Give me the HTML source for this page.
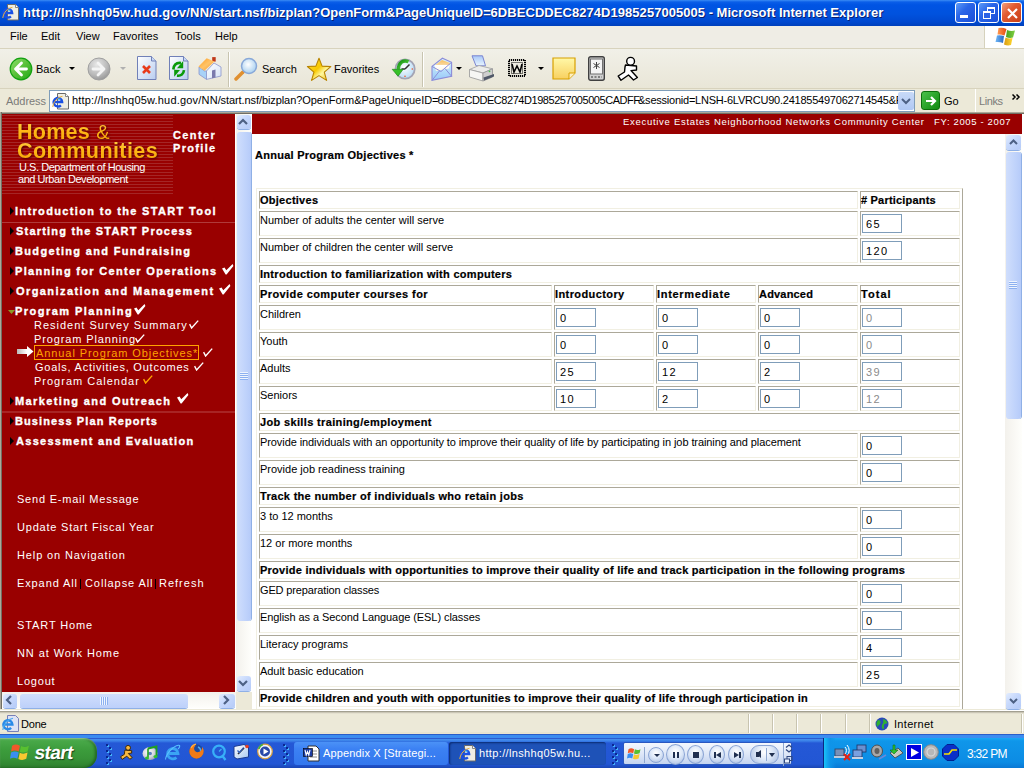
<!DOCTYPE html>
<html><head><meta charset="utf-8">
<style>
*{box-sizing:border-box}
html,body{margin:0;padding:0;width:1024px;height:768px;overflow:hidden;background:#ece9d8;font-family:"Liberation Sans",sans-serif}
.a{position:absolute}
#title{left:0;top:0;width:1024px;height:26px;background:linear-gradient(#3b8cf5 0,#0a5ee8 2px,#0054e3 5px,#0052de 14px,#0048cf 22px,#0040bb 26px)}
#title .t{left:23px;top:5px;color:#fff;font:bold 13px "Liberation Sans",sans-serif;text-shadow:1px 1px 0 #0a1e70;white-space:nowrap;letter-spacing:0.07px}
#menu{left:0;top:26px;width:1024px;height:23px;background:#efede5;border-bottom:1px solid #d8d3bd}
#menu span{position:absolute;top:4px;font-size:11px;color:#000}
#tool{left:0;top:49px;width:1024px;height:40px;background:linear-gradient(#f1f0e8,#e9e6d7);border-bottom:1px solid #d8d3bd}
#addr{left:0;top:89px;width:1024px;height:24px;background:#ece9d8}
#frames{left:0;top:112px;width:1024px;height:598px;background:#ece9d8}
#left{left:0;top:0;width:252px;height:597px;background:#fff}
#right{left:252px;top:0;width:772px;height:597px;background:#fff}
#status{left:0;top:710px;width:1024px;height:24px;background:linear-gradient(#8c8a7c 0,#b8b4a4 1px,#dcd8c8 2px,#ece9d8 3px,#ece9d8 21px,#e2ddc8 22px,#f2ecd8 23px);border-top:1px solid #fff}

#task{left:0;top:734px;width:1024px;height:34px;background:linear-gradient(#2a5ec8 0,#2a5ec8 1px,#3c8cf0 1px,#3c8cf0 4px,#2c5cd0 4px,#2c5cd0 5px,#4892ee 5px,#3a80e8 7px,#2458d6 9px,#2256d4 30px,#1a46b4 34px)}

.wb{top:2px;width:21px;height:21px;border:1px solid #fff;border-radius:3px;background:linear-gradient(135deg,#5e9cf8 0,#2a66e8 40%,#1a4ed8 100%)}
.lbl{top:14px;font-size:11px;color:#000}
.dd{top:18px;width:0;height:0;border-left:3px solid transparent;border-right:3px solid transparent;border-top:3px solid #000}
.sep{top:3px;width:2px;height:35px;border-left:1px solid #c8c4b0;border-right:1px solid #fff}

.logo1{font:bold 21.6px "Liberation Sans",sans-serif;background:linear-gradient(#ffd050 0%,#ffb818 45%,#f5a000 100%);-webkit-background-clip:text;background-clip:text;color:transparent;white-space:nowrap;letter-spacing:0.2px;filter:drop-shadow(1px 1.5px 1px rgba(60,0,0,.8))}
.logo2{font:11px "Liberation Sans",sans-serif;color:#fff;white-space:nowrap;letter-spacing:-0.2px}
.cp{font:bold 11px "Liberation Sans",sans-serif;color:#fff;letter-spacing:1.2px;-webkit-text-stroke:0.3px #fff}
.nav{font:bold 11px "Liberation Sans",sans-serif;color:#fff;white-space:nowrap;line-height:14px;-webkit-text-stroke:0.35px #fff}
.nav i{display:inline-block;width:0;height:0;border-top:3.5px solid transparent;border-bottom:3.5px solid transparent;border-left:4px solid #000;margin:0 2px 0 2px;vertical-align:0px}
.nav i.dn{border-left:3.5px solid transparent;border-right:3.5px solid transparent;border-top:4px solid #8a8a30;border-bottom:0;margin:0 1px 0 0;vertical-align:1px}
.ck{font-size:12px;letter-spacing:0}
.sub{font:11px "Liberation Sans",sans-serif;color:#fff;white-space:nowrap;line-height:14px;letter-spacing:1px}
.ck2{font-size:11px;letter-spacing:0}
.bl{left:17px;font:11px "Liberation Sans",sans-serif;color:#fff;white-space:nowrap;line-height:14px;letter-spacing:0.65px}
.vtrack{background:linear-gradient(90deg,#f3f1ec,#fefefb)}
.htrack{background:linear-gradient(#f3f1ec,#fefefb)}
.sbtn{border-radius:3px;background:linear-gradient(135deg,#e2ecfe 0,#c6d8fc 45%,#b4caf8 100%);box-shadow:0 1px 0 #8fb0e6}
.thumb{border-radius:3px;background:linear-gradient(90deg,#d0defc,#c0d3fb 60%,#b6cbf9);box-shadow:1px 0 0 #8fb0e6}
.grip{position:absolute;width:8px;height:8px;background:repeating-linear-gradient(#eef4fe 0,#eef4fe 1px,#8cb0f0 1px,#8cb0f0 2px)}
.hgrip{position:absolute;width:8px;height:8px;background:repeating-linear-gradient(90deg,#eef4fe 0,#eef4fe 1px,#8cb0f0 1px,#8cb0f0 2px)}
.ar{width:0;height:0;border-top:4px solid transparent;border-bottom:4px solid transparent;border-left:4px solid #000}

.hdr{font:9.5px "Liberation Sans",sans-serif;color:#fff;white-space:nowrap;line-height:12px;margin-top:-2px}
.ttl{font:bold 11px "Liberation Sans",sans-serif;color:#000;white-space:nowrap;line-height:13px;margin-top:-2px;margin-left:-1px;-webkit-text-stroke:0.2px #000}
.bh{font:bold 11px "Liberation Sans",sans-serif;color:#000;white-space:nowrap;line-height:13px;margin-top:-2px;margin-left:-1px;-webkit-text-stroke:0.2px #000}
.rg{font:11px "Liberation Sans",sans-serif;color:#000;white-space:nowrap;line-height:13px;margin-top:-2px;margin-left:-1px}
.cl{border:1px solid;border-color:#aca899 #f1efe2 #f1efe2 #aca899}
.tb{border:1px solid;border-color:#f1efe2 #aca899 #aca899 #f1efe2}
.inp{width:40px;height:19px;border:1px solid #7f9db9;background:#fff;font:11px "Liberation Sans",sans-serif;line-height:19px;padding-left:3px;letter-spacing:1.4px}

.ssep{top:3px;width:2px;height:19px;border-left:1px solid #c8c4b0;border-right:1px solid #fff}
#startbtn{left:0;top:4px;width:97px;height:30px;border-radius:0 13px 13px 0;background:linear-gradient(#6ac46a 0,#48a848 3px,#3c9c3c 12px,#389438 20px,#2e802e 30px);box-shadow:inset -2px 0 3px rgba(0,40,0,.45),inset 0 1px 1px rgba(255,255,255,.4)}
.grip2{width:6px;height:22px;background:radial-gradient(circle at 1.5px 1.5px,#0a2a90 1.2px,transparent 1.6px) 0 0/6px 4px,radial-gradient(circle at 3px 3px,#7ab0f8 1px,transparent 1.5px) 0 0/6px 4px}
.tbtn{top:8px;height:23px;border-radius:3px}
.tbt{top:5px;font-size:11px;color:#fff;white-space:nowrap;letter-spacing:0.15px}
#wmp{left:623px;top:8px;width:169px;height:23px;border-radius:2px;background:linear-gradient(#f4f8fe 0,#dfe8f8 50%,#c4d4f0 100%);border:1px solid #2a58c0}
.wb2{border-radius:50%;background:radial-gradient(circle at 50% 35%,#fff 0,#dde8f8 45%,#a8bce0 100%);border:1px solid #8aa4d4}
#tray{left:823px;top:4px;width:201px;height:30px;background:linear-gradient(90deg,#1ac4f8 0,#14a8f0 3px,#0f94e8 6px,rgba(15,148,232,0) 12px),linear-gradient(#18a8f4 0,#0f96ea 3px,#0c8ce4 24px,#0a78d4 30px);border-left:1px solid #0a2a80}
</style></head><body>
<div id="title" class="a">
 <svg class="a" style="left:2px;top:4px" width="17" height="17" viewBox="0 0 17 17"><path d="M5.5 .5h8l3 3v12.5h-11z" fill="#efeee4" stroke="#6a6a6a"/><path d="M13.5 .5v3h3" fill="#fff" stroke="#6a6a6a" stroke-width=".8"/><path d="M1.8 9h8.4a4.3 4.3 0 1 0-1.3 3.3" stroke="#1a50e4" stroke-width="2.3" fill="none"/><path d="M6 6.2h2.5" stroke="#40d0ff" stroke-width="1"/><path d="M.8 14C1.4 8.5 5.5 4 10.5 3.3" stroke="#e8b040" stroke-width="1" fill="none"/></svg>
 <div class="a t" style="letter-spacing:0.26px">http://lnshhq05w.hud.gov/NN/</div><div class="a t" style="left:212.7px;letter-spacing:-0.01px">start.nsf/bizplan?OpenForm&amp;PageUniqueID=</div><div class="a t" style="left:490.6px;letter-spacing:0.05px">6DBECDDEC8274D1985257005005 - </div><div class="a t" style="left:716.6px;letter-spacing:0.02px">Microsoft Internet Explorer</div>
 <div class="a wb" style="left:955px"><div class="a" style="left:4px;top:12px;width:8px;height:3px;background:#fff"></div></div>
 <div class="a wb" style="left:978px"><div class="a" style="left:8px;top:4px;width:8px;height:7px;border:1px solid #fff;border-top-width:2px"></div><div class="a" style="left:4px;top:8px;width:8px;height:8px;border:1px solid #fff;border-top-width:2px;background:#2a62e6"></div></div>
 <div class="a wb" style="left:1001px;background:linear-gradient(135deg,#f0a080 0,#e25a30 40%,#c8401a 100%)"><svg class="a" style="left:4px;top:4px" width="13" height="13"><path d="M2 2L11 11M11 2L2 11" stroke="#fff" stroke-width="2.2"/></svg></div>
</div>
<div id="menu" class="a">
 <span style="left:10px">File</span><span style="left:41px">Edit</span><span style="left:76px">View</span><span style="left:113px">Favorites</span><span style="left:175px">Tools</span><span style="left:215px">Help</span>
 <div class="a" style="left:984px;top:0;width:40px;height:22px;background:#fff;border-left:1px solid #d6d2bd">
  <svg class="a" style="left:9px;top:1px" width="22" height="20" viewBox="0 0 22 20"><defs><linearGradient id="wo" x1="0" x2="1"><stop offset="0" stop-color="#ff9a50"/><stop offset="1" stop-color="#e84a10"/></linearGradient><linearGradient id="wg" x1="0" x2="1"><stop offset="0" stop-color="#4aa020"/><stop offset="1" stop-color="#80d040"/></linearGradient><linearGradient id="wbl" x1="0" x2="1"><stop offset="0" stop-color="#70b8f8"/><stop offset="1" stop-color="#2a68c0"/></linearGradient><linearGradient id="wy" x1="0" x2="1"><stop offset="0" stop-color="#d89a10"/><stop offset="1" stop-color="#ffd830"/></linearGradient></defs><path d="M4.5 1Q8.5 0 12.5 2L10.5 8.5Q7 7 3.5 7.5z" fill="url(#wo)"/><path d="M13 3Q17 4.5 21 3.5L19 10.5Q15.5 11.5 12 10z" fill="url(#wg)"/><path d="M3 8.5Q6.5 8 10 9L9 16Q5.5 14.5 1.5 15z" fill="url(#wbl)"/><path d="M11.5 10.5Q15 12 18.5 11L17 18Q13.5 19 10 17.5z" fill="url(#wy)"/></svg>
 </div>
</div>
<div id="tool" class="a">
 <!-- back -->
 <svg class="a" style="left:9px;top:8px" width="24" height="24" viewBox="0 0 24 24"><defs><linearGradient id="gb" x1="0" y1="0" x2="1" y2="1"><stop offset="0" stop-color="#90e070"/><stop offset=".5" stop-color="#58c038"/><stop offset="1" stop-color="#20a818"/></linearGradient></defs><circle cx="12" cy="12" r="10.8" fill="url(#gb)" stroke="#12a010" stroke-width="1.2"/><path d="M12.5 6L6.5 12l6 6M7 12H17.5" stroke="#fff" stroke-width="2.8" fill="none" stroke-linecap="round" stroke-linejoin="round"/></svg>
 <span class="a lbl" style="left:36px">Back</span>
 <div class="a dd" style="left:69px"></div>
 <svg class="a" style="left:87px;top:8px" width="24" height="24" viewBox="0 0 24 24"><defs><radialGradient id="gf" cx="40%" cy="30%" r="70%"><stop offset="0" stop-color="#e8e8e8"/><stop offset=".7" stop-color="#b8b8b8"/><stop offset="1" stop-color="#9a9a9a"/></radialGradient></defs><circle cx="12" cy="12" r="11" fill="url(#gf)" stroke="#a0a0a0" stroke-width="1"/><path d="M11 6l6 6-6 6M16.5 12H6" stroke="#f4f4f4" stroke-width="2.8" fill="none" stroke-linecap="round" stroke-linejoin="round"/></svg>
 <div class="a dd" style="left:120px;border-top-color:#b0b0b0"></div>
 <!-- stop -->
 <svg class="a" style="left:137px;top:7px" width="20" height="24" viewBox="0 0 20 24"><defs><linearGradient id="gd" x1="0" y1="0" x2="1" y2="1"><stop offset="0" stop-color="#fff"/><stop offset="1" stop-color="#b8cdf0"/></linearGradient></defs><path d="M.5 .5h14l4.5 4.5v18.5H.5z" fill="url(#gd)" stroke="#7080b8"/><path d="M14.5 .5v4.5h4.5" fill="#c8d8f4" stroke="#7080b8"/><path d="M6 10l7 7M13 10l-7 7" stroke="#e83a1a" stroke-width="2.6"/></svg>
 <!-- refresh -->
 <svg class="a" style="left:169px;top:7px" width="20" height="24" viewBox="0 0 20 24"><path d="M.5 .5h14l4.5 4.5v18.5H.5z" fill="url(#gd)" stroke="#7080b8"/><path d="M14.5 .5v4.5h4.5" fill="#c8d8f4" stroke="#7080b8"/><path d="M4.3 13.5C4.8 9 7.5 6.5 12 7" stroke="#0a9a0a" stroke-width="2.6" fill="none"/><path d="M14.2 5V12.2H8z" fill="#0a9a0a"/><path d="M15 14.2C14.6 18 12 20.2 8 19.6" stroke="#0a9a0a" stroke-width="2.6" fill="none"/><path d="M5.2 13.8V20.8L11 14z" fill="#0a9a0a"/></svg>
 <!-- home -->
 <svg class="a" style="left:196px;top:6px" width="26" height="26" viewBox="0 0 26 26"><defs><linearGradient id="hr" x1="0" y1="0" x2="1" y2="1"><stop offset="0" stop-color="#ff9a20"/><stop offset=".5" stop-color="#ffc468"/><stop offset="1" stop-color="#f89020"/></linearGradient><linearGradient id="hw" x1="0" y1="0" x2="1" y2="1"><stop offset="0" stop-color="#fff"/><stop offset="1" stop-color="#d4e2f6"/></linearGradient></defs><path d="M3 12L8.5 16 10.5 16 10.5 24.4 3 19.3z" fill="#a8d2f8" stroke="#8a94cc" stroke-width=".8"/><path d="M10.5 16L18 8 25 12 25 21 10.5 24.4z" fill="url(#hw)" stroke="#8a94cc" stroke-width=".8"/><rect x="16.2" y="2.1" width="3.5" height="4.5" fill="#c03818"/><path d="M2.5 11.5L10.7 3.3 18.5 6.4 8.4 15.8z" fill="url(#hr)"/><path d="M16 15.4L19.5 14.6 19.5 22.4 16 23.3z" fill="#7a7aac"/></svg>
 <div class="a sep" style="left:228px"></div>
 <!-- search -->
 <svg class="a" style="left:234px;top:8px" width="25" height="24" viewBox="0 0 25 24"><defs><radialGradient id="gs" cx="45%" cy="40%" r="60%"><stop offset="0" stop-color="#fff"/><stop offset="1" stop-color="#a8d0f0"/></radialGradient></defs><path d="M2 22l7-7" stroke="#e09030" stroke-width="3.5" stroke-linecap="round"/><circle cx="15" cy="9" r="7.5" fill="url(#gs)" stroke="#88a8d8" stroke-width="1.5"/></svg>
 <span class="a lbl" style="left:262px">Search</span>
 <!-- star -->
 <svg class="a" style="left:306px;top:7px" width="26" height="25" viewBox="0 0 26 25"><defs><linearGradient id="gst" x1="0" y1="0" x2="1" y2="1"><stop offset="0" stop-color="#ffe040"/><stop offset=".45" stop-color="#f8c800"/><stop offset=".65" stop-color="#fff8a0"/><stop offset="1" stop-color="#f0b800"/></linearGradient></defs><path d="M13 2.3L16.1 10.1 24.8 10.6 18.3 16.2 20.6 24.4 13 19.6 5.6 24.4 7.9 16.2 1.4 10.5 9.9 10.1z" fill="url(#gst)" stroke="#b88400" stroke-width="1.1" stroke-linejoin="round"/></svg>
 <span class="a lbl" style="left:334px">Favorites</span>
 <!-- history -->
 <svg class="a" style="left:391px;top:6px" width="26" height="26" viewBox="0 0 26 26"><defs><radialGradient id="hf" cx="45%" cy="40%" r="60%"><stop offset="0" stop-color="#fff"/><stop offset="1" stop-color="#b8dcf6"/></radialGradient><linearGradient id="ha" x1="0" y1="0" x2="1" y2="1"><stop offset="0" stop-color="#109010"/><stop offset="1" stop-color="#70e050"/></linearGradient></defs><circle cx="14.1" cy="14" r="9.6" fill="url(#hf)" stroke="#a4a4b4" stroke-width="1.8"/><path d="M14 14L18.5 9.5M10.5 14H14" stroke="#303030" stroke-width="1.5"/><circle cx="21.3" cy="14" r=".8" fill="#f05020"/><circle cx="14" cy="21.3" r=".8" fill="#f05020"/><path d="M17.5 6.8C12.5 4.5 7.5 7.5 7.3 14.5" stroke="url(#ha)" stroke-width="3.4" fill="none"/><path d="M1.2 14.3L12.2 14.3 7 21.2z" fill="#38c028" stroke="#108010" stroke-width=".6"/></svg>
 <div class="a sep" style="left:422px"></div>
 <!-- mail -->
 <svg class="a" style="left:431px;top:6px" width="22" height="27" viewBox="0 0 22 27"><defs><linearGradient id="me" x1="0" y1="0" x2="0" y2="1"><stop offset="0" stop-color="#d8f6fe"/><stop offset="1" stop-color="#98c8f8"/></linearGradient><linearGradient id="ml" x1="0" y1="0" x2="0" y2="1"><stop offset="0" stop-color="#f8c060"/><stop offset=".45" stop-color="#f8d8a0"/><stop offset=".5" stop-color="#fff"/><stop offset="1" stop-color="#fff8e0"/></linearGradient></defs><path d="M1 11.4L11.4 3.2 20.6 7.3V21.3L1 25.4z" fill="url(#me)" stroke="#8c8cd8" stroke-width="1.1"/><path d="M3.5 10.5L11 5 19 8 18 13.5 5 16z" fill="url(#ml)"/><path d="M1 11.4L10 16.5 20.6 7.3M1 25.4L8.5 16M20.6 21.3L14 13.5" stroke="#8c8cd8" stroke-width="1" fill="none"/></svg>
 <div class="a dd" style="left:456px"></div>
 <!-- printer -->
 <svg class="a" style="left:468px;top:6px" width="27" height="28" viewBox="0 0 27 28"><defs><linearGradient id="pp" x1="0" y1="0" x2="0" y2="1"><stop offset="0" stop-color="#a8c8f8"/><stop offset="1" stop-color="#e8f4fe"/></linearGradient></defs><path d="M4 .8h10.5l3 10H8z" fill="url(#pp)" stroke="#7a84d0" stroke-width="1"/><path d="M1.5 14.5L11 10.5 24.5 13.8 15 18z" fill="#ececea" stroke="#a8a8a8" stroke-width=".9"/><path d="M1.5 14.5L15 18V26L1.5 22z" fill="#f6f6f4" stroke="#a0a0a0" stroke-width=".9"/><path d="M15 18L24.5 13.8V22L15 26z" fill="#cfcfcf" stroke="#989898" stroke-width=".9"/><path d="M15.5 22.5L26 19 26 21.5 16 25.5z" fill="#505868"/><circle cx="21.5" cy="16.3" r=".9" fill="#48c048"/></svg>
 <!-- word -->
 <svg class="a" style="left:508px;top:10px" width="18" height="18" viewBox="0 0 18 18"><rect x="1" y="1" width="16" height="16" fill="none" stroke="#000" stroke-width="2" stroke-dasharray="1.2 .8"/><rect x="3.5" y="3.5" width="11" height="11" fill="none" stroke="#000" stroke-width="1" stroke-dasharray="1 1"/><path d="M4 5l2 8 3-6 3 6 2-8" stroke="#000" stroke-width="1.6" fill="none"/></svg>
 <div class="a dd" style="left:538px"></div>
 <!-- sticky -->
 <svg class="a" style="left:552px;top:8px" width="24" height="23" viewBox="0 0 24 23"><defs><linearGradient id="gn" x1="0" y1="0" x2="0" y2="1"><stop offset="0" stop-color="#fff8a8"/><stop offset="1" stop-color="#f8d060"/></linearGradient></defs><path d="M1 1h22v15l-6 6H1z" fill="url(#gn)" stroke="#d8a000" stroke-width="1.2"/><path d="M23 16h-6v6" fill="#fff0c0" stroke="#d8a000"/></svg>
 <!-- palm -->
 <svg class="a" style="left:588px;top:7px" width="17" height="25" viewBox="0 0 17 25"><rect x=".7" y=".7" width="15.6" height="23.6" rx="2" fill="#d0d0d0" stroke="#404040" stroke-width="1.4"/><rect x="2.5" y="3" width="12" height="15" fill="#f4f4f4" stroke="#707070"/><path d="M8.5 6v7M5.5 7.5l6 4M11.5 7.5l-6 4" stroke="#404040" stroke-width="1"/><path d="M3 21h11" stroke="#808080" stroke-width="2" stroke-dasharray="2 1.5"/></svg>
 <!-- aim -->
 <svg class="a" style="left:616px;top:6px" width="24" height="28" viewBox="0 0 24 28"><path d="M9.5 10L20.5 11 20.5 15 15 15.6 21.4 22.5 17.5 25 12.5 20 5 25.3 2.2 21 8.5 17 9 12z" fill="#fff" stroke="#000" stroke-width="1.4" stroke-linejoin="round"/><circle cx="14.6" cy="6.3" r="3.9" fill="#fff" stroke="#000" stroke-width="1.4"/></svg>
</div>
<div id="addr" class="a">
 <span class="a" style="left:6px;top:6px;font-size:11px;color:#7b7b78;letter-spacing:-0.05px">Address</span>
 <div class="a" style="left:49px;top:1px;width:866px;height:22px;background:#fff;border:1px solid #7f9db9">
  <svg class="a" style="left:2px;top:2px" width="17" height="17" viewBox="0 0 17 17"><path d="M5.5 .5h8l3 3v12.5h-11z" fill="#efeee4" stroke="#6a6a6a"/><path d="M13.5 .5v3h3" fill="#fff" stroke="#6a6a6a" stroke-width=".8"/><path d="M1.8 9h8.4a4.3 4.3 0 1 0-1.3 3.3" stroke="#1a50e4" stroke-width="2.3" fill="none"/><path d="M6 6.2h2.5" stroke="#40d0ff" stroke-width="1"/><path d="M.8 14C1.4 8.5 5.5 4 10.5 3.3" stroke="#e8b040" stroke-width="1" fill="none"/></svg>
  <div class="a" style="left:22px;top:3px;width:826px;height:16px;overflow:hidden;font-size:11px;color:#000;white-space:nowrap"><span class="a" style="left:0;top:0;letter-spacing:0.19px">http://lnshhq05w.hud.gov/NN/</span><span class="a" style="left:148.5px;top:0;letter-spacing:-0.08px">start.nsf/bizplan?OpenForm&amp;PageUniqueID=</span><span class="a" style="left:365.5px;top:0;letter-spacing:-0.45px">6DBECDDEC8274D1985257005005CADFF</span><span class="a" style="left:566px;top:0;letter-spacing:-0.23px">&amp;sessionid=LNSH-6LVRCU90.241855497062714545&amp;PageID=</span></div>
  <div class="a" style="left:848px;top:1px;width:16px;height:18px;background:linear-gradient(#c8daf8,#b0c8f4);border-radius:2px"><svg class="a" style="left:3px;top:5px" width="10" height="8"><path d="M1 2l4 4 4-4" stroke="#4d6185" stroke-width="2" fill="none"/></svg></div>
 </div>
 <div class="a" style="left:921px;top:2px;width:19px;height:19px;border-radius:3px;background:linear-gradient(135deg,#48c048,#108a10);border:1px solid #0a700a"><svg class="a" style="left:2px;top:2px" width="14" height="14"><path d="M2 7h9M7 3l4 4-4 4" stroke="#fff" stroke-width="2.2" fill="none"/></svg></div>
 <span class="a" style="left:944px;top:6px;font-size:11px">Go</span>
 <div class="a" style="left:975px;top:0;width:1px;height:23px;background:#c8c4b0;border-right:1px solid #fff"></div>
 <span class="a" style="left:979px;top:6px;font-size:11px;color:#7b7b78;letter-spacing:-0.4px">Links</span>
 <svg class="a" style="left:1012px;top:5px" width="9" height="6" viewBox="0 0 9 6"><path d="M.5 .5L3 3 .5 5.5M4.5 .5L7 3 4.5 5.5" stroke="#000" stroke-width="1.5" fill="none"/></svg>
</div>

<div id="frames" class="a">
 <div id="left" class="a">
 <div class="a" style="left:0;top:0;width:252px;height:2px;background:linear-gradient(#aca899 0,#aca899 1px,#716f64 1px)"></div><div class="a" style="left:0;top:0;width:2px;height:597px;background:linear-gradient(90deg,#aca899 0,#aca899 1px,#716f64 1px)"></div>
 <div class="a" style="left:2px;top:2px;width:233px;height:578px;background:#990000"></div>
 <div class="a" style="left:2px;top:3px;width:171px;height:79px;background:repeating-linear-gradient(#a52626 0,#a52626 1px,#990000 1px,#990000 3px)"></div>
 <div class="a logo1" style="left:17px;top:7px">Homes <span style="font-weight:normal;font-size:20px">&amp;</span></div>
 <div class="a logo1" style="left:17px;top:26px;letter-spacing:0.4px">Communities</div>
 <div class="a logo2" style="left:19px;top:49px;letter-spacing:-0.45px">U.S. Department of Housing</div>
 <div class="a logo2" style="left:18px;top:61px;letter-spacing:-0.45px">and Urban Development</div>
 <div class="a cp" style="left:173px;top:17px;letter-spacing:1.4px">Center</div>
 <div class="a cp" style="left:173px;top:30px;letter-spacing:1.33px">Profile</div>
 <div class="a" style="left:2px;top:110px;width:233px;height:1px;background:#b03a3a"></div>
 <div class="a" style="left:2px;top:299px;width:233px;height:2px;background:#a82424"></div>
 <i class="a ar" style="left:10px;top:95px"></i><div class="nav a" style="left:15px;top:92px;letter-spacing:1.345px">Introduction to the START Tool</div>
 <i class="a ar" style="left:10px;top:115px"></i><div class="nav a" style="left:16px;top:112px;letter-spacing:1.2px">Starting the START Process</div>
 <i class="a ar" style="left:10px;top:135px"></i><div class="nav a" style="left:15px;top:132px;letter-spacing:1.333px">Budgeting and Fundraising</div>
 <i class="a ar" style="left:10px;top:155px"></i><div class="nav a" style="left:15px;top:152px;letter-spacing:1.31px">Planning for Center Operations</div>
 <svg class="a ckb" style="left:222px;top:152px" width="12" height="11" viewBox="0 0 12 11"><path d="M0 4.5L2.5 3.5 4.3 6.3 10.6 0 11.4 2 4.6 10.5 3.6 10.5z" fill="#fff"/></svg>
 <i class="a ar" style="left:10px;top:175px"></i><div class="nav a" style="left:16px;top:172px;letter-spacing:1.423px">Organization and Management</div>
 <svg class="a ckb" style="left:219px;top:172px" width="12" height="11" viewBox="0 0 12 11"><path d="M0 4.5L2.5 3.5 4.3 6.3 10.6 0 11.4 2 4.6 10.5 3.6 10.5z" fill="#fff"/></svg>
 <svg class="a" style="left:8px;top:198px" width="7" height="4" viewBox="0 0 7 4"><path d="M0 0h7L3.5 4z" fill="#8a9a28"/></svg><div class="nav a" style="left:15px;top:192px;letter-spacing:1.467px">Program Planning</div>
 <svg class="a ckb" style="left:134px;top:192px" width="12" height="11" viewBox="0 0 12 11"><path d="M0 4.5L2.5 3.5 4.3 6.3 10.6 0 11.4 2 4.6 10.5 3.6 10.5z" fill="#fff"/></svg>
 <div class="sub a" style="left:34px;top:206px;letter-spacing:1px">Resident Survey Summary</div>
 <svg class="a" style="left:189px;top:208px" width="10" height="9" viewBox="0 0 10 9"><path d="M.6 4.2L2.6 8 9.2 .6" stroke="#fff" stroke-width="1.4" fill="none"/></svg>
 <div class="sub a" style="left:34px;top:220px;letter-spacing:0.867px">Program Planning</div>
 <svg class="a" style="left:135px;top:222px" width="10" height="9" viewBox="0 0 10 9"><path d="M.6 4.2L2.6 8 9.2 .6" stroke="#fff" stroke-width="1.4" fill="none"/></svg>
 <svg class="a" style="left:17px;top:234px" width="17" height="11" viewBox="0 0 17 11"><defs><linearGradient id="ga" x1="0" x2="1"><stop offset="0" stop-color="#b8b8b8"/><stop offset=".6" stop-color="#fff"/></linearGradient></defs><path d="M0 3h10V0l6.5 5.5L10 11V8H0z" fill="url(#ga)"/></svg>
 <div class="a" style="left:34px;top:233px;width:165px;height:15px;border:1px solid #ffa200"></div>
 <div class="sub a" style="top:234px;color:#ffa200;left:36px;letter-spacing:0.92px">Annual Program Objectives*</div>
 <svg class="a" style="left:203px;top:236px" width="10" height="9" viewBox="0 0 10 9"><path d="M.6 4.2L2.6 8 9.2 .6" stroke="#fff" stroke-width="1.4" fill="none"/></svg>
 <div class="sub a" style="top:248px;left:35px;letter-spacing:0.769px">Goals, Activities, Outcomes</div>
 <svg class="a" style="left:194px;top:250px" width="10" height="9" viewBox="0 0 10 9"><path d="M.6 4.2L2.6 8 9.2 .6" stroke="#fff" stroke-width="1.4" fill="none"/></svg>
 <div class="sub a" style="top:262px;left:34px;letter-spacing:1px">Program Calendar</div>
 <svg class="a" style="left:143px;top:263px" width="10" height="9" viewBox="0 0 10 9"><path d="M.6 4.2L2.6 8 9.2 .6" stroke="#ffa200" stroke-width="1.4" fill="none"/></svg>
 <i class="a ar" style="left:10px;top:285px"></i><div class="nav a" style="left:15px;top:282px;letter-spacing:1.381px">Marketing and Outreach</div>
 <svg class="a ckb" style="left:177px;top:281px" width="12" height="11" viewBox="0 0 12 11"><path d="M0 4.5L2.5 3.5 4.3 6.3 10.6 0 11.4 2 4.6 10.5 3.6 10.5z" fill="#fff"/></svg>
 <i class="a ar" style="left:10px;top:305px"></i><div class="nav a" style="left:15px;top:302px;letter-spacing:1.1px">Business Plan Reports</div>
 <i class="a ar" style="left:10px;top:325px"></i><div class="nav a" style="left:16px;top:322px;letter-spacing:1.292px">Assessment and Evaluation</div>
 <div class="bl a" style="top:380px;letter-spacing:0.778px">Send E-mail Message</div>
 <div class="bl a" style="top:408px;letter-spacing:0.783px">Update Start Fiscal Year</div>
 <div class="bl a" style="top:436px;letter-spacing:0.882px">Help on Navigation</div>
 <div class="bl a" style="top:464px;letter-spacing:0.889px">Expand All</div>
 <div class="a" style="left:80px;top:467px;width:1px;height:10px;background:#000"></div>
 <div class="bl a" style="left:85px;top:464px;letter-spacing:0.909px">Collapse All</div>
 <div class="a" style="left:155px;top:467px;width:1px;height:10px;background:#000"></div>
 <div class="bl a" style="left:159px;top:464px;letter-spacing:1px">Refresh</div>
 <div class="bl a" style="top:506px;letter-spacing:0.889px">START Home</div>
 <div class="bl a" style="top:534px;letter-spacing:0.929px">NN at Work Home</div>
 <div class="bl a" style="top:562px;letter-spacing:0.8px">Logout</div>
 <!-- vertical scrollbar -->
 <div class="a" style="left:235px;top:2px;width:17px;height:578px;background:#fff"></div>
 <div class="a vtrack" style="left:236px;top:2px;width:15px;height:578px"></div>
 <div class="a sbtn" style="left:237px;top:3px;width:14px;height:14px"><svg class="a" style="left:1px;top:3px" width="10" height="7"><path d="M1 6L5 2l4 4" stroke="#4d6185" stroke-width="2.2" fill="none"/></svg></div>
 <div class="a thumb" style="left:237px;top:20px;width:14px;height:489px"><div class="grip" style="top:240px;left:3px"></div></div>
 <div class="a sbtn" style="left:237px;top:564px;width:14px;height:15px"><svg class="a" style="left:1px;top:4px" width="10" height="7"><path d="M1 1l4 4 4-4" stroke="#4d6185" stroke-width="2.2" fill="none"/></svg></div>
 <!-- horizontal scrollbar -->
 <div class="a htrack" style="left:2px;top:580px;width:234px;height:16px"></div>
 <div class="a sbtn" style="left:3px;top:582px;width:14px;height:14px"><svg class="a" style="left:2px;top:1px" width="7" height="10"><path d="M6 1L2 5l4 4" stroke="#4d6185" stroke-width="2.2" fill="none"/></svg></div>
 <div class="a thumb" style="left:20px;top:582px;width:168px;height:14px;background:linear-gradient(#d0defc,#bdd0fa);box-shadow:0 1px 0 #8fb0e6"><div class="hgrip" style="left:80px;top:3px"></div></div>
 <div class="a sbtn" style="left:219px;top:582px;width:16px;height:14px"><svg class="a" style="left:4px;top:1px" width="7" height="10"><path d="M1 1l4 4-4 4" stroke="#4d6185" stroke-width="2.2" fill="none"/></svg></div>
 <div class="a" style="left:236px;top:580px;width:16px;height:17px;background:#ece9d8"></div>
</div>

 <div id="right" class="a">
 <div class="a" style="left:0;top:0;width:772px;height:2px;background:linear-gradient(#aca899 0,#aca899 1px,#716f64 1px)"></div>
 <div class="a" style="left:0;top:0;width:753px;height:597px;overflow:hidden">
<div class="a ttl" style="left:4px;top:39px;letter-spacing:0.26px">Annual Program Objectives *</div>
<div class="a tb" style="left:4px;top:76px;width:707px;height:540px"></div>
<div class="a cl" style="left:7px;top:79px;width:599px;height:18px"></div>
<div class="a cl" style="left:608px;top:79px;width:100px;height:18px"></div>
<div class="a bh" style="left:9px;top:84px;letter-spacing:0.262px">Objectives</div>
<div class="a bh" style="left:610px;top:84px;letter-spacing:0.194px"># Participants</div>
<div class="a cl" style="left:7px;top:99px;width:599px;height:25px"></div>
<div class="a cl" style="left:608px;top:99px;width:100px;height:25px"></div>
<div class="a rg" style="left:9px;top:104px;letter-spacing:0px">Number of adults the center will serve</div>
<div class="a inp" style="left:610px;top:102px"><span style="">65</span></div>
<div class="a cl" style="left:7px;top:126px;width:599px;height:25px"></div>
<div class="a cl" style="left:608px;top:126px;width:100px;height:25px"></div>
<div class="a rg" style="left:9px;top:131px;letter-spacing:0px">Number of children the center will serve</div>
<div class="a inp" style="left:610px;top:129px"><span style="">120</span></div>
<div class="a cl" style="left:7px;top:153px;width:701px;height:18px"></div>
<div class="a bh" style="left:9px;top:158px;letter-spacing:0.289px">Introduction to familiarization with computers</div>
<div class="a cl" style="left:7px;top:173px;width:293px;height:18px"></div>
<div class="a bh" style="left:9px;top:178px;letter-spacing:0.41px">Provide computer courses for</div>
<div class="a cl" style="left:302px;top:173px;width:100px;height:18px"></div>
<div class="a bh" style="left:304px;top:178px;letter-spacing:0.404px">Introductory</div>
<div class="a cl" style="left:404px;top:173px;width:100px;height:18px"></div>
<div class="a bh" style="left:406px;top:178px;letter-spacing:0.676px">Intermediate</div>
<div class="a cl" style="left:506px;top:173px;width:100px;height:18px"></div>
<div class="a bh" style="left:508px;top:178px;letter-spacing:0.183px">Advanced</div>
<div class="a cl" style="left:608px;top:173px;width:100px;height:18px"></div>
<div class="a bh" style="left:610px;top:178px;letter-spacing:1.04px">Total</div>
<div class="a cl" style="left:7px;top:193px;width:293px;height:25px"></div>
<div class="a cl" style="left:302px;top:193px;width:100px;height:25px"></div>
<div class="a cl" style="left:404px;top:193px;width:100px;height:25px"></div>
<div class="a cl" style="left:506px;top:193px;width:100px;height:25px"></div>
<div class="a cl" style="left:608px;top:193px;width:100px;height:25px"></div>
<div class="a rg" style="left:9px;top:198px;letter-spacing:0px">Children</div>
<div class="a inp" style="left:304px;top:196px"><span style="">0</span></div>
<div class="a inp" style="left:406px;top:196px"><span style="">0</span></div>
<div class="a inp" style="left:508px;top:196px"><span style="">0</span></div>
<div class="a inp" style="left:610px;top:196px"><span style="color:#8a8a8a">0</span></div>
<div class="a cl" style="left:7px;top:220px;width:293px;height:25px"></div>
<div class="a cl" style="left:302px;top:220px;width:100px;height:25px"></div>
<div class="a cl" style="left:404px;top:220px;width:100px;height:25px"></div>
<div class="a cl" style="left:506px;top:220px;width:100px;height:25px"></div>
<div class="a cl" style="left:608px;top:220px;width:100px;height:25px"></div>
<div class="a rg" style="left:9px;top:225px;letter-spacing:0px">Youth</div>
<div class="a inp" style="left:304px;top:223px"><span style="">0</span></div>
<div class="a inp" style="left:406px;top:223px"><span style="">0</span></div>
<div class="a inp" style="left:508px;top:223px"><span style="">0</span></div>
<div class="a inp" style="left:610px;top:223px"><span style="color:#8a8a8a">0</span></div>
<div class="a cl" style="left:7px;top:247px;width:293px;height:25px"></div>
<div class="a cl" style="left:302px;top:247px;width:100px;height:25px"></div>
<div class="a cl" style="left:404px;top:247px;width:100px;height:25px"></div>
<div class="a cl" style="left:506px;top:247px;width:100px;height:25px"></div>
<div class="a cl" style="left:608px;top:247px;width:100px;height:25px"></div>
<div class="a rg" style="left:9px;top:252px;letter-spacing:0px">Adults</div>
<div class="a inp" style="left:304px;top:250px"><span style="">25</span></div>
<div class="a inp" style="left:406px;top:250px"><span style="">12</span></div>
<div class="a inp" style="left:508px;top:250px"><span style="">2</span></div>
<div class="a inp" style="left:610px;top:250px"><span style="color:#8a8a8a">39</span></div>
<div class="a cl" style="left:7px;top:274px;width:293px;height:25px"></div>
<div class="a cl" style="left:302px;top:274px;width:100px;height:25px"></div>
<div class="a cl" style="left:404px;top:274px;width:100px;height:25px"></div>
<div class="a cl" style="left:506px;top:274px;width:100px;height:25px"></div>
<div class="a cl" style="left:608px;top:274px;width:100px;height:25px"></div>
<div class="a rg" style="left:9px;top:279px;letter-spacing:0px">Seniors</div>
<div class="a inp" style="left:304px;top:277px"><span style="">10</span></div>
<div class="a inp" style="left:406px;top:277px"><span style="">2</span></div>
<div class="a inp" style="left:508px;top:277px"><span style="">0</span></div>
<div class="a inp" style="left:610px;top:277px"><span style="color:#8a8a8a">12</span></div>
<div class="a cl" style="left:7px;top:301px;width:701px;height:18px"></div>
<div class="a bh" style="left:9px;top:306px;letter-spacing:0.35px">Job skills training/employment</div>
<div class="a cl" style="left:7px;top:321px;width:599px;height:25px"></div>
<div class="a cl" style="left:608px;top:321px;width:100px;height:25px"></div>
<div class="a rg" style="left:9px;top:326px;letter-spacing:-0.085px">Provide individuals with an opportunity to improve their quality of life by participating in job training and placement</div>
<div class="a inp" style="left:610px;top:324px"><span style="">0</span></div>
<div class="a cl" style="left:7px;top:348px;width:599px;height:25px"></div>
<div class="a cl" style="left:608px;top:348px;width:100px;height:25px"></div>
<div class="a rg" style="left:9px;top:353px;letter-spacing:0px">Provide job readiness training</div>
<div class="a inp" style="left:610px;top:351px"><span style="">0</span></div>
<div class="a cl" style="left:7px;top:375px;width:701px;height:18px"></div>
<div class="a bh" style="left:9px;top:380px;letter-spacing:0.304px">Track the number of individuals who retain jobs</div>
<div class="a cl" style="left:7px;top:395px;width:599px;height:25px"></div>
<div class="a cl" style="left:608px;top:395px;width:100px;height:25px"></div>
<div class="a rg" style="left:9px;top:400px;letter-spacing:0px">3 to 12 months</div>
<div class="a inp" style="left:610px;top:398px"><span style="">0</span></div>
<div class="a cl" style="left:7px;top:422px;width:599px;height:25px"></div>
<div class="a cl" style="left:608px;top:422px;width:100px;height:25px"></div>
<div class="a rg" style="left:9px;top:427px;letter-spacing:0px">12 or more months</div>
<div class="a inp" style="left:610px;top:425px"><span style="">0</span></div>
<div class="a cl" style="left:7px;top:449px;width:701px;height:18px"></div>
<div class="a bh" style="left:9px;top:454px;letter-spacing:0.25px">Provide individuals with opportunities to improve their quality of life and track participation in the following programs</div>
<div class="a cl" style="left:7px;top:469px;width:599px;height:25px"></div>
<div class="a cl" style="left:608px;top:469px;width:100px;height:25px"></div>
<div class="a rg" style="left:9px;top:474px;letter-spacing:-0.136px">GED preparation classes</div>
<div class="a inp" style="left:610px;top:472px"><span style="">0</span></div>
<div class="a cl" style="left:7px;top:496px;width:599px;height:25px"></div>
<div class="a cl" style="left:608px;top:496px;width:100px;height:25px"></div>
<div class="a rg" style="left:9px;top:501px;letter-spacing:-0.073px">English as a Second Language (ESL) classes</div>
<div class="a inp" style="left:610px;top:499px"><span style="">0</span></div>
<div class="a cl" style="left:7px;top:523px;width:599px;height:25px"></div>
<div class="a cl" style="left:608px;top:523px;width:100px;height:25px"></div>
<div class="a rg" style="left:9px;top:528px;letter-spacing:0px">Literacy programs</div>
<div class="a inp" style="left:610px;top:526px"><span style="">4</span></div>
<div class="a cl" style="left:7px;top:550px;width:599px;height:25px"></div>
<div class="a cl" style="left:608px;top:550px;width:100px;height:25px"></div>
<div class="a rg" style="left:9px;top:555px;letter-spacing:-0.05px">Adult basic education</div>
<div class="a inp" style="left:610px;top:553px"><span style="">25</span></div>
<div class="a cl" style="left:7px;top:577px;width:701px;height:18px"></div>
<div class="a bh" style="left:9px;top:582px;letter-spacing:0.235px">Provide children and youth with opportunities to improve their quality of life through participation in</div>
<div class="a cl" style="left:7px;top:597px;width:701px;height:25px"></div>
 </div>
<div class="a vtrack" style="left:753px;top:22px;width:17px;height:575px"></div>
<div class="a sbtn" style="left:754px;top:23px;width:15px;height:15px"><svg class="a" style="left:3px;top:4px" width="9" height="6"><path d="M1 5l3.5-3.5L8 5" stroke="#4d6185" stroke-width="2" fill="none"/></svg></div>
<div class="a thumb" style="left:754px;top:40px;width:15px;height:267px"><div class="grip" style="top:129px;left:3px"></div></div>
<div class="a sbtn" style="left:754px;top:581px;width:15px;height:16px"><svg class="a" style="left:3px;top:5px" width="9" height="6"><path d="M1 1l3.5 3.5L8 1" stroke="#4d6185" stroke-width="2" fill="none"/></svg></div>
<div class="a" style="left:0px;top:2px;width:770px;height:20px;background:#990000"></div>
<div class="a hdr" style="left:371px;top:6px;letter-spacing:0.709px">Executive Estates Neighborhood Networks Community Center</div>
<div class="a hdr" style="left:682px;top:6px;letter-spacing:0.643px">FY: 2005 - 2007</div>
 <div class="a" style="left:770px;top:2px;width:2px;height:595px;background:#fff"></div>
</div>
</div>
<div id="status" class="a">
 <svg class="a" style="left:2px;top:4px" width="17" height="17" viewBox="0 0 17 17"><path d="M5.5 .5h8l3 3v13h-11z" fill="#dde2f4" stroke="#7880b8"/><path d="M1.8 9.5h8.6a4.5 4.5 0 1 0-1.3 3.4" stroke="#2a8ae8" stroke-width="2.4" fill="none"/><path d="M.8 15C1.4 9 6 4 11 3.2" stroke="#4aa8f0" stroke-width="1.1" fill="none"/></svg>
 <span class="a" style="left:21px;top:7px;font-size:11px;color:#000;letter-spacing:-0.2px">Done</span>
 <div class="a ssep" style="left:748px"></div><div class="a ssep" style="left:772px"></div><div class="a ssep" style="left:796px"></div><div class="a ssep" style="left:820px"></div><div class="a ssep" style="left:845px"></div><div class="a ssep" style="left:869px"></div><div class="a ssep" style="left:1021px"></div>
 <svg class="a" style="left:875px;top:6px" width="14" height="14" viewBox="0 0 14 14"><circle cx="7" cy="7" r="6.5" fill="#2a4ab8"/><path d="M3 3c2 0 3 1 2.5 3S3 8 2.5 10C1 8 1 5 3 3zM8 2c2 .5 4 2 4.5 4-1 1-3 0-3.5 2s1 3-1 4.5C7 11 6 9 7.5 7S8 4 8 2z" fill="#30b030"/></svg>
 <span class="a" style="left:894px;top:7px;font-size:11px;color:#000;letter-spacing:0.3px">Internet</span>
</div>
<div id="task" class="a">
 <div class="a" id="startbtn"><svg class="a" style="left:10px;top:5px" width="21" height="19" viewBox="0 0 20 18"><path d="M2 2.5C4.5 1 6.5 1 9.5 2.5L8.3 8C5.5 6.8 3.5 6.8 1 8z" fill="#f0582a"/><path d="M10.5 2.8c2.5 1.2 4.5 1.2 7.5-.3L16.8 8c-2.8 1.3-4.8 1.3-7.5.2z" fill="#58c030"/><path d="M1 9c2.5-1.3 4.5-1.3 7.3 0L7 15C4.5 13.6 2.5 13.6 0 15z" fill="#3a8ef0"/><path d="M9.3 9.3c2.6 1.2 4.5 1.2 7.4-.2L15.5 15c-2.8 1.4-4.8 1.4-7.5.2z" fill="#f8c830"/></svg><span class="a" style="left:33px;top:4px;font:bold 19px 'Liberation Sans',sans-serif;color:#fff;text-shadow:1px 1px 1px #1a3a1a;letter-spacing:-0.6px;transform:skewX(-9deg);transform-origin:0 100%">start</span></div>
 <svg class="a" style="left:106px;top:10px" width="6" height="22"><rect x="1" y="1" width="2" height="2" fill="#44b4fa"/><rect x="0" y="0" width="2" height="2" fill="#0a2890"/><rect x="4" y="4" width="2" height="2" fill="#44b4fa"/><rect x="3" y="3" width="2" height="2" fill="#0a2890"/><rect x="1" y="7" width="2" height="2" fill="#44b4fa"/><rect x="0" y="6" width="2" height="2" fill="#0a2890"/><rect x="4" y="10" width="2" height="2" fill="#44b4fa"/><rect x="3" y="9" width="2" height="2" fill="#0a2890"/><rect x="1" y="13" width="2" height="2" fill="#44b4fa"/><rect x="0" y="12" width="2" height="2" fill="#0a2890"/><rect x="4" y="16" width="2" height="2" fill="#44b4fa"/><rect x="3" y="15" width="2" height="2" fill="#0a2890"/><rect x="1" y="19" width="2" height="2" fill="#44b4fa"/><rect x="0" y="18" width="2" height="2" fill="#0a2890"/></svg>
 <svg class="a" style="left:119px;top:10px" width="15" height="17" viewBox="0 0 24 28"><path d="M9.5 10L20.5 11 20.5 15 15 15.6 21.4 22.5 17.5 25 12.5 20 5 25.3 2.2 21 8.5 17 9 12z" fill="#f8b840" stroke="#402800" stroke-width="1.6" stroke-linejoin="round"/><circle cx="14.6" cy="6.3" r="4" fill="#f8b840" stroke="#402800" stroke-width="1.6"/></svg>
 <svg class="a" style="left:142px;top:10px" width="17" height="17" viewBox="0 0 17 17"><defs><radialGradient id="cd" cx="40%" cy="40%" r="60%"><stop offset="0" stop-color="#fff"/><stop offset=".6" stop-color="#d8d8e0"/><stop offset="1" stop-color="#a8a8b8"/></radialGradient></defs><ellipse cx="8" cy="9.5" rx="7.5" ry="6.5" fill="url(#cd)"/><ellipse cx="8" cy="9.5" rx="2" ry="1.8" fill="#5a80c0"/><path d="M6 4.5L14.5 2.5V12" stroke="#20a020" stroke-width="1.8" fill="none"/><path d="M6 4.5V13.5" stroke="#20a020" stroke-width="1.6"/><ellipse cx="5" cy="14" rx="2" ry="1.6" fill="#30c030"/><ellipse cx="13.5" cy="12.5" rx="2" ry="1.6" fill="#30c030"/></svg>
 <svg class="a" style="left:164px;top:9px" width="17" height="18" viewBox="0 0 17 18"><path d="M3.5 10.5h10.5a5.2 5.2 0 1 0-1.6 4" stroke="#3aa4f4" stroke-width="2.8" fill="none"/><path d="M1.5 16.5C2 11 9 3 14.5 2.2c1.8-.2 1.5 2-.5 4" stroke="#58c0ff" stroke-width="1.1" fill="none"/></svg>
 <svg class="a" style="left:188px;top:9px" width="17" height="17" viewBox="0 0 17 17"><circle cx="8.5" cy="8.5" r="7.2" fill="#1a4aa0"/><path d="M10 4c2 1 3 3 2.5 5" stroke="#50a8f0" stroke-width="1.5" fill="none"/><path d="M8.5 1.3a7.2 7.2 0 1 0 7.2 7.2c0-1.8-.6-3.2-1.6-4.4.3 2.4-1.2 4.6-3.6 5-2.2.4-4.2-1.2-4.4-3.2-.2-1.6.8-2.8 2-3.4C6.8 4 6 2.5 8.5 1.3z" fill="#f07a18"/><path d="M3 5c1-2 3-3.5 5-3.8" stroke="#ffb040" stroke-width="1.2" fill="none"/></svg>
 <svg class="a" style="left:212px;top:10px" width="15" height="17" viewBox="0 0 15 17"><circle cx="7" cy="7.5" r="5.8" fill="none" stroke="#38b0f8" stroke-width="2.2"/><path d="M10.5 12l3 4" stroke="#38b0f8" stroke-width="2.4"/><path d="M7 7.5l2.5-2.5" stroke="#38b0f8" stroke-width="1.3"/></svg>
 <svg class="a" style="left:233px;top:9px" width="17" height="17" viewBox="0 0 17 17"><defs><linearGradient id="ol" x1="0" y1="0" x2="1" y2="1"><stop offset="0" stop-color="#fff"/><stop offset="1" stop-color="#a8c8f0"/></linearGradient></defs><path d="M1 3.5L11 1.5 15.5 4 15.5 14 4 16 1 14z" fill="url(#ol)" stroke="#1a3a90" stroke-width="1"/><path d="M5 11l6-6" stroke="#303030" stroke-width="1.6"/><path d="M4.5 7.5l2 2 4-5" stroke="#3060c0" stroke-width="1.2" fill="none"/><circle cx="14" cy="3.5" r="1.8" fill="#e84020"/></svg>
 <svg class="a" style="left:257px;top:9px" width="16" height="17" viewBox="0 0 16 17"><circle cx="8" cy="8.5" r="7.3" fill="#f4f4fa" stroke="#d8a040" stroke-width="1.2"/><path d="M1.8 6a6.6 6.6 0 0 1 4-4.6" stroke="#40b040" stroke-width="1.6" fill="none"/><circle cx="8" cy="8.5" r="5" fill="#2848a8"/><path d="M6.5 5.5v6l5-3z" fill="#fff"/></svg>
 <svg class="a" style="left:283px;top:10px" width="6" height="22"><rect x="1" y="1" width="2" height="2" fill="#44b4fa"/><rect x="0" y="0" width="2" height="2" fill="#0a2890"/><rect x="4" y="4" width="2" height="2" fill="#44b4fa"/><rect x="3" y="3" width="2" height="2" fill="#0a2890"/><rect x="1" y="7" width="2" height="2" fill="#44b4fa"/><rect x="0" y="6" width="2" height="2" fill="#0a2890"/><rect x="4" y="10" width="2" height="2" fill="#44b4fa"/><rect x="3" y="9" width="2" height="2" fill="#0a2890"/><rect x="1" y="13" width="2" height="2" fill="#44b4fa"/><rect x="0" y="12" width="2" height="2" fill="#0a2890"/><rect x="4" y="16" width="2" height="2" fill="#44b4fa"/><rect x="3" y="15" width="2" height="2" fill="#0a2890"/><rect x="1" y="19" width="2" height="2" fill="#44b4fa"/><rect x="0" y="18" width="2" height="2" fill="#0a2890"/></svg>
 <div class="a tbtn" style="left:294px;width:154px;background:linear-gradient(#4b92f7 0,#3c81f3 30%,#3377ee 100%)">
  <svg class="a" style="left:9px;top:3px" width="17" height="17" viewBox="0 0 17 17"><path d="M5 1h8l3 3v12H5z" fill="#fff" stroke="#303030"/><path d="M7 6h7M7 9h7M7 12h7" stroke="#909090"/><rect x="0.5" y="3.5" width="9" height="8" fill="#1a3aa0" stroke="#000" stroke-width=".6"/><path d="M2 5l1.2 5 1.3-3.5L5.8 10 7 5" stroke="#fff" stroke-width="1.1" fill="none"/></svg>
  <span class="a tbt" style="left:29px">Appendix X [Strategi...</span>
 </div>
 <div class="a tbtn" style="left:449px;width:157px;background:#1e52b7;box-shadow:inset 1px 1px 2px #0a2a70">
  <svg class="a" style="left:10px;top:3px" width="17" height="17" viewBox="0 0 17 17"><path d="M5.5 .5h8l3 3v12.5h-11z" fill="#efeee4" stroke="#6a6a6a"/><path d="M13.5 .5v3h3" fill="#fff" stroke="#6a6a6a" stroke-width=".8"/><path d="M1.8 9h8.4a4.3 4.3 0 1 0-1.3 3.3" stroke="#1a50e4" stroke-width="2.3" fill="none"/><path d="M6 6.2h2.5" stroke="#40d0ff" stroke-width="1"/><path d="M.8 14C1.4 8.5 5.5 4 10.5 3.3" stroke="#e8b040" stroke-width="1" fill="none"/></svg>
  <span class="a tbt" style="left:30px;letter-spacing:0.35px">http://lnshhq05w.hu...</span>
 </div>
 <svg class="a" style="left:612px;top:10px" width="6" height="22"><rect x="1" y="1" width="2" height="2" fill="#44b4fa"/><rect x="0" y="0" width="2" height="2" fill="#0a2890"/><rect x="4" y="4" width="2" height="2" fill="#44b4fa"/><rect x="3" y="3" width="2" height="2" fill="#0a2890"/><rect x="1" y="7" width="2" height="2" fill="#44b4fa"/><rect x="0" y="6" width="2" height="2" fill="#0a2890"/><rect x="4" y="10" width="2" height="2" fill="#44b4fa"/><rect x="3" y="9" width="2" height="2" fill="#0a2890"/><rect x="1" y="13" width="2" height="2" fill="#44b4fa"/><rect x="0" y="12" width="2" height="2" fill="#0a2890"/><rect x="4" y="16" width="2" height="2" fill="#44b4fa"/><rect x="3" y="15" width="2" height="2" fill="#0a2890"/><rect x="1" y="19" width="2" height="2" fill="#44b4fa"/><rect x="0" y="18" width="2" height="2" fill="#0a2890"/></svg>
 <div class="a" id="wmp">
  <svg class="a" style="left:3px;top:4px" width="15" height="14" viewBox="0 0 20 18"><path d="M2 2.5C4.5 1 6.5 1 9.5 2.5L8.3 8C5.5 6.8 3.5 6.8 1 8z" fill="#f0582a"/><path d="M10.5 2.8c2.5 1.2 4.5 1.2 7.5-.3L16.8 8c-2.8 1.3-4.8 1.3-7.5.2z" fill="#58c030"/><path d="M1 9c2.5-1.3 4.5-1.3 7.3 0L7 15C4.5 13.6 2.5 13.6 0 15z" fill="#3a8ef0"/><path d="M9.3 9.3c2.6 1.2 4.5 1.2 7.4-.2L15.5 15c-2.8 1.4-4.8 1.4-7.5.2z" fill="#f8c830"/></svg>
  <div class="a" style="left:20px;top:4px;width:1px;height:16px;background:#90a8d0"></div>
  <div class="a wb2" style="left:24px;top:4px;width:16px;height:16px"><div class="a" style="left:5px;top:6px;border-left:3px solid transparent;border-right:3px solid transparent;border-top:3px solid #203050"></div></div>
  <div class="a wb2" style="left:42px;top:1px;width:19px;height:21px"><div class="a" style="left:6px;top:7px;width:2px;height:6px;background:#203050"></div><div class="a" style="left:10px;top:7px;width:2px;height:6px;background:#203050"></div></div>
  <div class="a wb2" style="left:63px;top:2px;width:17px;height:19px"><div class="a" style="left:5px;top:6px;width:6px;height:6px;background:#203050"></div></div>
  <div class="a wb2" style="left:85px;top:2px;width:16px;height:19px"><div class="a" style="left:4px;top:6px;width:2px;height:6px;background:#203050"></div><div class="a" style="left:6px;top:6px;border-top:3px solid transparent;border-bottom:3px solid transparent;border-right:5px solid #203050"></div></div>
  <div class="a wb2" style="left:104px;top:2px;width:16px;height:19px"><div class="a" style="left:10px;top:6px;width:2px;height:6px;background:#203050"></div><div class="a" style="left:5px;top:6px;border-top:3px solid transparent;border-bottom:3px solid transparent;border-left:5px solid #203050"></div></div>
  <div class="a wb2" style="left:126px;top:2px;width:29px;height:19px;border-radius:9px"><div class="a" style="left:5px;top:6px;width:3px;height:5px;background:#203050"></div><div class="a" style="left:5px;top:4px;border-top:4px solid transparent;border-bottom:4px solid transparent;border-right:5px solid #203050;width:0"></div><div class="a" style="left:15px;top:2px;width:1px;height:13px;background:#90a8d0"></div><div class="a" style="left:18px;top:7px;border-left:3px solid transparent;border-right:3px solid transparent;border-top:4px solid #203050"></div></div>
  <div class="a" style="left:159px;top:0;width:10px;height:23px;border-left:1px solid #90a8d0"><svg class="a" style="left:1px;top:1px" width="8" height="9"><path d="M1 3.5l3-2.5 3 2.5M1 5.5l3 2.5 3-2.5" stroke="#304880" stroke-width="1.3" fill="none"/></svg><svg class="a" style="left:0px;top:13px" width="9" height="8"><rect x="3" y=".5" width="5" height="4" fill="none" stroke="#304880"/><rect x=".5" y="3" width="5" height="4" fill="#e8f0fc" stroke="#304880"/></svg></div>
 </div>
 <div class="a" id="tray">
  <svg class="a" style="left:10px;top:6px" width="17" height="17" viewBox="0 0 17 17"><rect x="1" y="5" width="9" height="7" fill="#7890b8" stroke="#304060" stroke-width=".8"/><rect x="0" y="12" width="11" height="2" fill="#c0c8d8"/><path d="M11 3a5 5 0 0 1 0 7M13 1a8 8 0 0 1 0 11" stroke="#fff" stroke-width="1" fill="none"/><path d="M10 10l6 6M16 10l-6 6" stroke="#e82010" stroke-width="2"/></svg>
  <svg class="a" style="left:28px;top:6px" width="15" height="16" viewBox="0 0 15 16"><rect x="5" y="1" width="9" height="7" fill="#6a90d0" stroke="#203060" stroke-width=".8"/><rect x="1" y="6" width="9" height="7" fill="#7aa0e0" stroke="#203060" stroke-width=".8"/><rect x="0" y="13" width="11" height="2" fill="#c8d0e0"/></svg>
  <svg class="a" style="left:46px;top:6px" width="17" height="17" viewBox="0 0 17 17"><ellipse cx="7" cy="7" rx="5.5" ry="6" fill="#a8a8a8" stroke="#505050"/><ellipse cx="7" cy="7" rx="2.5" ry="3" fill="#606060"/><path d="M9 15l7-4" stroke="#6a8ad8" stroke-width="1.5"/></svg>
  <svg class="a" style="left:65px;top:6px" width="14" height="16" viewBox="0 0 14 16"><path d="M1 9l8-5 5 5-8 5z" fill="#c8c8c0" stroke="#404040" stroke-width=".8"/><path d="M4 1v5H1l4 4 4-4H6V1z" fill="#30c030" stroke="#107010" stroke-width=".6"/></svg>
  <div class="a" style="left:82px;top:6px;width:16px;height:16px;background:#0000e0;border:1px solid #fff"><svg class="a" style="left:3px;top:2px" width="10" height="11"><path d="M1 1v9l8-4.5z" fill="#fff"/></svg></div>
  <svg class="a" style="left:99px;top:6px" width="16" height="16" viewBox="0 0 16 16"><circle cx="8" cy="8" r="7.3" fill="#b8b8b8" stroke="#888"/><circle cx="8" cy="8" r="4" fill="none" stroke="#d8d8d8" stroke-width="1.2"/></svg>
  <svg class="a" style="left:118px;top:6px" width="17" height="17" viewBox="0 0 17 17"><path d="M5 .5h7l4.5 4.5v7L12 16.5H5L.5 12V5z" fill="#0a30c8" stroke="#002090"/><path d="M2 10h5l3-4h5" stroke="#f8e000" stroke-width="1.6" fill="none"/></svg>
  <span class="a" style="left:143px;top:9px;font-size:12px;color:#fff;letter-spacing:-0.7px">3:32 PM</span>
 </div>
</div>

</body></html>
